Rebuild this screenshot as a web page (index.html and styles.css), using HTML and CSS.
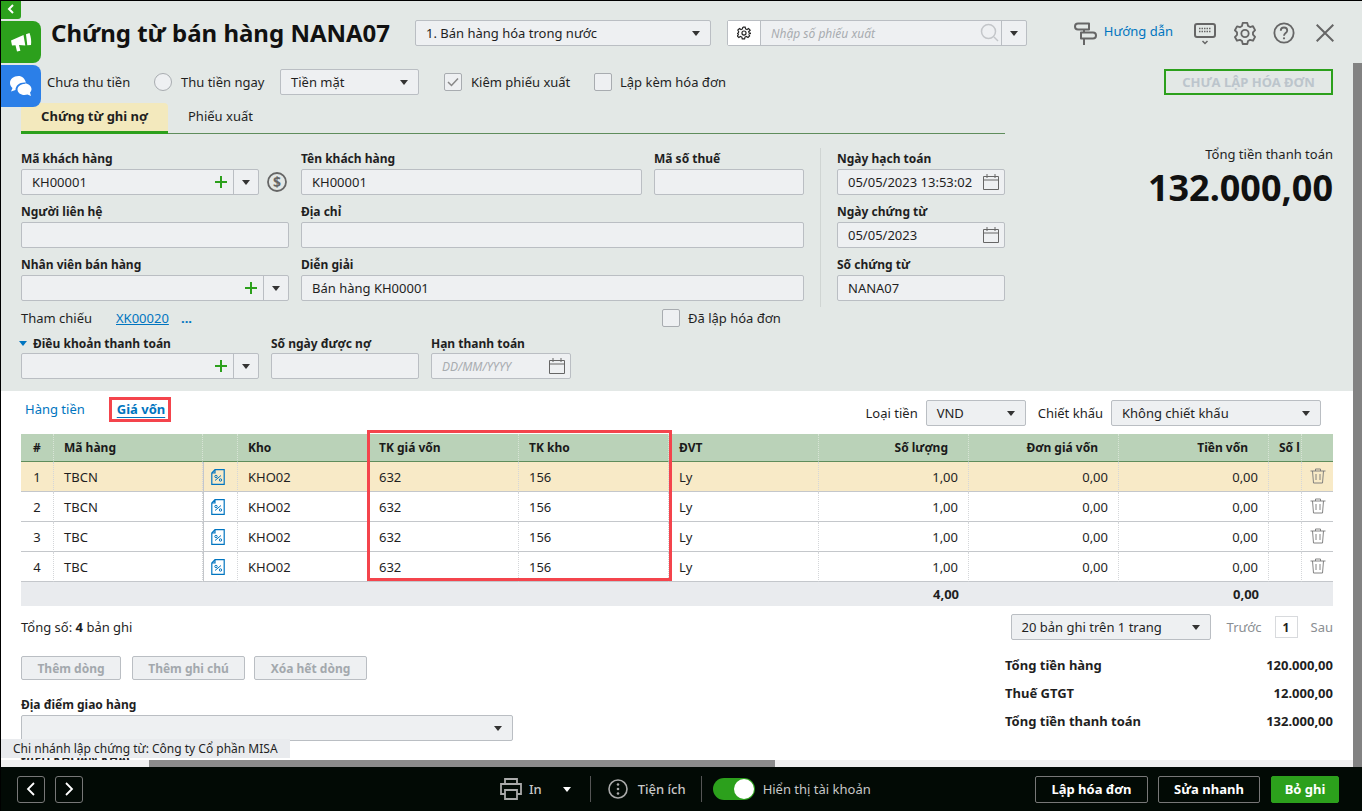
FILE: index.html
```html
<!DOCTYPE html>
<html lang="vi">
<head>
<meta charset="utf-8">
<title>Chứng từ bán hàng NANA07</title>
<link rel="stylesheet" href="styles.css">
</head>
<body>
<svg class="defs" width="0" height="0" aria-hidden="true">
  <symbol id="cal" viewBox="0 0 18 18"><path d="M1.5 3.5h15v13h-15zM1.5 7h15M5 1v4M13 1v4" fill="none" stroke="#666" stroke-width="1"/></symbol>
  <symbol id="plus" viewBox="0 0 12 12"><path d="M6 0v12M0 6h12" stroke="#2ca01c" stroke-width="2" fill="none"/></symbol>
  <symbol id="doc" viewBox="0 0 14 16"><path d="M4 .7h9.2v14.6H.8V4zM4 .7V4H.8" fill="none" stroke="#0075c0" stroke-width="1.2"/><path d="M4 11.5l6-5" stroke="#0075c0" stroke-width="1"/><circle cx="5" cy="7.5" r="1.2" fill="none" stroke="#0075c0"/><circle cx="9.5" cy="11" r="1.2" fill="none" stroke="#0075c0"/></symbol>
  <symbol id="trash" viewBox="0 0 16 16"><path d="M.5 3h15M5.5 3V1h5v2M2.5 3l1 12h9l1-12M6 6v6M10 6v6" fill="none" stroke="#777" stroke-width=".9"/></symbol>
</svg>
<div class="app">
  <div class="workspace">
    <button class="side-collapse" type="button"><svg width="8" height="10" viewBox="0 0 8 10"><path d="M6 1L2 5l4 4" fill="none" stroke="#fff" stroke-width="2"/></svg></button>
    <div class="side-tab side-tab-green"><svg width="22" height="22" viewBox="0 0 22 22"><path d="M1 9.500L13.500 4l1.800 10.500-6.300-.6 1.400 5.800-3.400.8-1.500-6.300-3.500.4z" fill="#fff"/><path d="M16 3.200l3.500-1.200c1.500 4 2 8 1.500 12l-3.700.3z" fill="#fff"/></svg></div>
    <div class="side-tab side-tab-blue"><svg width="24" height="22" viewBox="0 0 24 22"><path d="M9.500 1C4.500 1 1 4.200 1 8c0 2 1 3.700 2.500 5L2 16.500l4.500-1.500c0-4 3.500-7.500 9-7.500h1.400C16 3.700 13 1 9.500 1z" fill="#fff"/><path d="M15.500 9C11.500 9 8.500 11.500 8.500 14.500S11.500 20 15.500 20c1 0 2-.2 3-.5l3.500 1.500-1-3.500c1-1 1.500-2.200 1.500-3.500 0-3-3-5.500-6.500-5.500z" fill="#fff"/></svg></div>

    <section class="top-panel">
      <header class="title-row">
        <h1 class="title">Chứng từ bán hàng NANA07</h1>
        <div class="select select-type"><span>1. Bán hàng hóa trong nước</span><i class="caret"></i></div>
        <div class="search-box">
          <span class="search-gear"><svg width="14" height="14" viewBox="0 0 24 24"><circle cx="12" cy="12" r="3.500" fill="none" stroke="#222" stroke-width="2"/><path d="M10 2h4l.7 3 2.500 1 2.600-1.600 2.800 2.800L20 9.800l1 2.500 3 .7v-2M10 2l-.7 3-2.500 1-2.600-1.600L1.400 7.200 3 9.800 2 12.300l-2 .7M20 14.200l1.600 2.600-2.800 2.800-2.600-1.600-2.500 1-.7 3h-4l-.7-3-2.500-1-2.600 1.600-2.800-2.800L3 14.200" fill="none" stroke="#222" stroke-width="2"/></svg></span>
          <span class="search-input">Nhập số phiếu xuất</span>
          <svg class="search-icon" width="20" height="20" viewBox="0 0 20 20"><circle cx="8.500" cy="8.500" r="7" fill="none" stroke="#c3c6c9" stroke-width="1.500"/><path d="M14 14l4 4" stroke="#c3c6c9" stroke-width="1.500"/></svg>
          <span class="search-drop"><i class="caret"></i></span>
        </div>
        <div class="tools">
          <svg class="guide-icon" width="23" height="24" viewBox="0 0 23 24"><path d="M4 1.500h11v6H4a3 3 0 0 1 0-6zM7 10.500h12a3 3 0 0 1 0 6H7zM10 7.500v3M10 16.500v6.500" fill="none" stroke="#666" stroke-width="2" stroke-linejoin="round"/></svg>
          <a class="guide-link">Hướng dẫn</a>
          <svg class="tool-key" width="22" height="22" viewBox="0 0 22 22"><rect x="1" y="1" width="20" height="13" rx="2" fill="none" stroke="#666" stroke-width="2"/><path d="M5 5.500h12M5 8.500h12" stroke="#666" stroke-width="1.500" stroke-dasharray="1.500 1"/><path d="M8.500 18l2.500 2.500 2.500-2.500" fill="none" stroke="#666" stroke-width="1.500"/></svg>
          <svg class="tool-gear" width="22" height="24" viewBox="0 0 24 26"><path d="M9.500 2h5l.8 3.200 2.200 1.300 3.200-.9 2.300 4.200-2.300 2.400v2.600l2.300 2.400-2.300 4.200-3.200-.9-2.200 1.300-.8 3.200h-5l-.8-3.200-2.200-1.300-3.200.9L1 17.400l2.300-2.400v-2.600L1 10l2.300-4.200 3.200.9 2.200-1.300z" fill="none" stroke="#666" stroke-width="2" stroke-linejoin="round"/><circle cx="12" cy="13.500" r="4" fill="none" stroke="#666" stroke-width="2"/></svg>
          <svg class="tool-help" width="22" height="22" viewBox="0 0 24 24"><circle cx="12" cy="12" r="10.500" fill="none" stroke="#666" stroke-width="2"/><path d="M8.500 9.500C8.500 7.300 10 6 12 6s3.500 1.300 3.500 3.200c0 2.800-3.500 2.800-3.500 5.800" fill="none" stroke="#666" stroke-width="2"/><circle cx="12" cy="17.800" r="1.200" fill="#666"/></svg>
          <svg class="tool-close" width="18" height="18" viewBox="0 0 18 18"><path d="M.7.7l16.600 16.600M17.300.7L.7 17.300" stroke="#666" stroke-width="2"/></svg>
        </div>
      </header>

      <div class="option-row">
        <span class="opt-text opt-first">Chưa thu tiền</span>
        <i class="radio"></i>
        <span class="opt-text opt-second">Thu tiền ngay</span>
        <div class="select select-pay"><span>Tiền mặt</span><i class="caret"></i></div>
        <i class="check check-on"><svg width="12" height="10" viewBox="0 0 12 10"><path d="M1 5l3.500 3.500L11 1.500" fill="none" stroke="#888" stroke-width="1.500"/></svg></i>
        <span class="opt-text opt-third">Kiêm phiếu xuất</span>
        <i class="check check-off"></i>
        <span class="opt-text">Lập kèm hóa đơn</span>
        <span class="invoice-state">CHƯA LẬP HÓA ĐƠN</span>
      </div>

      <div class="tab-row">
        <span class="tab tab-active">Chứng từ ghi nợ</span>
        <span class="tab">Phiếu xuất</span>
      </div>

      <div class="form-wrap">
        <div class="form-grid">
          <div class="field">
            <label class="label">Mã khách hàng</label>
            <div class="with-dollar">
              <div class="combo combo-short"><span class="combo-text">KH00001</span><svg class="combo-plus" width="12" height="12"><use href="#plus"/></svg><span class="combo-drop"><i class="caret"></i></span></div>
              <svg class="dollar-icon" width="20" height="20" viewBox="0 0 20 20"><circle cx="10" cy="10" r="9" fill="none" stroke="#666" stroke-width="1.800"/><text x="10" y="15" text-anchor="middle" class="dollar">$</text></svg>
            </div>
          </div>
          <div class="field">
            <label class="label">Tên khách hàng</label>
            <div class="input">KH00001</div>
          </div>
          <div class="field">
            <label class="label">Mã số thuế</label>
            <div class="input"></div>
          </div>
          <div class="field-side">
            <div class="field">
              <label class="label">Ngày hạch toán</label>
              <div class="input input-date"><span>05/05/2023 13:53:02</span><svg width="18" height="18"><use href="#cal"/></svg></div>
            </div>
            <div class="field">
              <label class="label">Ngày chứng từ</label>
              <div class="input input-date"><span>05/05/2023</span><svg width="18" height="18"><use href="#cal"/></svg></div>
            </div>
            <div class="field">
              <label class="label">Số chứng từ</label>
              <div class="input">NANA07</div>
            </div>
          </div>
          <div class="field">
            <label class="label">Người liên hệ</label>
            <div class="input"></div>
          </div>
          <div class="field field-wide">
            <label class="label">Địa chỉ</label>
            <div class="input"></div>
          </div>
          <div class="field">
            <label class="label">Nhân viên bán hàng</label>
            <div class="combo"><span class="combo-text"></span><svg class="combo-plus" width="12" height="12"><use href="#plus"/></svg><span class="combo-drop"><i class="caret"></i></span></div>
          </div>
          <div class="field field-wide">
            <label class="label">Diễn giải</label>
            <div class="input">Bán hàng KH00001</div>
          </div>
        </div>

        <div class="ref-row">
          <span class="ref-label">Tham chiếu</span>
          <a class="ref-link">XK00020</a>
          <span class="ref-more">...</span>
          <i class="check check-ref"></i>
          <span class="opt-text">Đã lập hóa đơn</span>
        </div>

        <div class="terms-row">
          <div class="field field-terms">
            <label class="label"><i class="caret caret-blue"></i>Điều khoản thanh toán</label>
            <div class="combo"><span class="combo-text"></span><svg class="combo-plus" width="12" height="12"><use href="#plus"/></svg><span class="combo-drop"><i class="caret"></i></span></div>
          </div>
          <div class="field field-days">
            <label class="label">Số ngày được nợ</label>
            <div class="input"></div>
          </div>
          <div class="field field-due">
            <label class="label">Hạn thanh toán</label>
            <div class="input input-date"><span class="placeholder">DD/MM/YYYY</span><svg width="18" height="18"><use href="#cal"/></svg></div>
          </div>
        </div>

        <div class="grand-total">
          <div class="grand-label">Tổng tiền thanh toán</div>
          <div class="grand-value">132.000,00</div>
        </div>
      </div>
    </section>

    <section class="detail-panel">
      <div class="detail-bar">
        <span class="sub-tab">Hàng tiền</span>
        <span class="sub-tab sub-tab-active">Giá vốn</span>
        <span class="bar-label bar-currency">Loại tiền</span>
        <div class="select select-currency"><span>VND</span><i class="caret"></i></div>
        <span class="bar-label bar-discount">Chiết khấu</span>
        <div class="select select-discount"><span>Không chiết khấu</span><i class="caret"></i></div>
      </div>

      <table class="grid">
        <colgroup>
          <col class="c-no"><col class="c-code"><col class="c-doc"><col class="c-store"><col class="c-acc"><col class="c-acc"><col class="c-acc"><col class="c-acc"><col class="c-acc"><col class="c-acc"><col class="c-lot"><col class="c-del">
        </colgroup>
        <thead>
          <tr>
            <th class="ta-c">#</th><th>Mã hàng</th><th></th><th>Kho</th><th>TK giá vốn</th><th>TK kho</th><th>ĐVT</th>
            <th class="ta-r pad-r">Số lượng</th><th class="ta-r pad-r">Đơn giá vốn</th><th class="ta-r pad-r">Tiền vốn</th><th class="clip">Số l</th><th></th>
          </tr>
        </thead>
        <tbody>
          <tr class="row-on">
            <td class="ta-c">1</td><td>TBCN</td><td class="cell-doc"><svg width="14" height="16"><use href="#doc"/></svg></td><td>KHO02</td><td>632</td><td>156</td><td>Ly</td>
            <td class="ta-r">1,00</td><td class="ta-r">0,00</td><td class="ta-r">0,00</td><td></td><td class="ta-c"><svg class="trash-icon" width="16" height="16"><use href="#trash"/></svg></td>
          </tr>
          <tr>
            <td class="ta-c">2</td><td>TBCN</td><td class="cell-doc"><svg width="14" height="16"><use href="#doc"/></svg></td><td>KHO02</td><td>632</td><td>156</td><td>Ly</td>
            <td class="ta-r">1,00</td><td class="ta-r">0,00</td><td class="ta-r">0,00</td><td></td><td class="ta-c"><svg class="trash-icon" width="16" height="16"><use href="#trash"/></svg></td>
          </tr>
          <tr>
            <td class="ta-c">3</td><td>TBC</td><td class="cell-doc"><svg width="14" height="16"><use href="#doc"/></svg></td><td>KHO02</td><td>632</td><td>156</td><td>Ly</td>
            <td class="ta-r">1,00</td><td class="ta-r">0,00</td><td class="ta-r">0,00</td><td></td><td class="ta-c"><svg class="trash-icon" width="16" height="16"><use href="#trash"/></svg></td>
          </tr>
          <tr>
            <td class="ta-c">4</td><td>TBC</td><td class="cell-doc"><svg width="14" height="16"><use href="#doc"/></svg></td><td>KHO02</td><td>632</td><td>156</td><td>Ly</td>
            <td class="ta-r">1,00</td><td class="ta-r">0,00</td><td class="ta-r">0,00</td><td></td><td class="ta-c"><svg class="trash-icon" width="16" height="16"><use href="#trash"/></svg></td>
          </tr>
        </tbody>
        <tfoot>
          <tr><td colspan="7"></td><td class="ta-r">4,00</td><td></td><td class="ta-r">0,00</td><td colspan="2"></td></tr>
        </tfoot>
      </table>

      <div class="pager-row">
        <span class="count">Tổng số: <b>4</b> bản ghi</span>
        <div class="select select-page"><span>20 bản ghi trên 1 trang</span><i class="caret"></i></div>
        <span class="page-nav page-prev">Trước</span>
        <span class="page-num">1</span>
        <span class="page-nav">Sau</span>
      </div>

      <div class="lower">
        <div class="lower-left">
          <div class="btn-row">
            <span class="btn-off btn-add">Thêm dòng</span>
            <span class="btn-off btn-note">Thêm ghi chú</span>
            <span class="btn-off btn-clear">Xóa hết dòng</span>
          </div>
          <label class="label label-delivery">Địa điểm giao hàng</label>
          <div class="select select-delivery"><span></span><i class="caret"></i></div>
          <div class="label label-next">ĐIỀU KHOẢN KHÁC</div>
        </div>
        <div class="summary">
          <div class="sum-row"><b>Tổng tiền hàng</b><b>120.000,00</b></div>
          <div class="sum-row"><b>Thuế GTGT</b><b>12.000,00</b></div>
          <div class="sum-row"><b>Tổng tiền thanh toán</b><b>132.000,00</b></div>
        </div>
      </div>

      <i class="mark mark-tab"></i>
      <i class="mark mark-cols"></i>
    </section>

    <div class="branch-tip">Chi nhánh lập chứng từ: Công ty Cổ phần MISA</div>
    <div class="scroll-h"><i class="scroll-h-thumb"></i></div>
    <div class="scroll-v"></div>
  </div>

  <footer class="footer">
    <button class="nav-btn" type="button"><svg width="10" height="14" viewBox="0 0 10 14"><path d="M8 1L2 7l6 6" fill="none" stroke="#fff" stroke-width="1.800"/></svg></button>
    <button class="nav-btn" type="button"><svg width="10" height="14" viewBox="0 0 10 14"><path d="M2 1l6 6-6 6" fill="none" stroke="#fff" stroke-width="1.800"/></svg></button>
    <div class="foot-center">
      <svg width="22" height="22" viewBox="0 0 22 22"><path d="M5 6V1h12v5M5 16H1V6h20v10h-4" fill="none" stroke="#aaa" stroke-width="1.800"/><path d="M5 12h12v9H5z" fill="none" stroke="#aaa" stroke-width="1.800"/></svg>
      <span class="foot-text foot-in">In</span>
      <i class="caret caret-white"></i>
      <i class="foot-sep foot-sep-a"></i>
      <svg width="20" height="20" viewBox="0 0 20 20"><circle cx="10" cy="10" r="9" fill="none" stroke="#aaa" stroke-width="1.600"/><circle cx="10" cy="5.500" r="1.300" fill="#aaa"/><circle cx="10" cy="10" r="1.300" fill="#aaa"/><circle cx="10" cy="14.500" r="1.300" fill="#aaa"/></svg>
      <span class="foot-text foot-util">Tiện ích</span>
      <i class="foot-sep foot-sep-b"></i>
      <span class="toggle"><i></i></span>
      <span class="foot-text">Hiển thị tài khoản</span>
    </div>
    <div class="foot-right">
      <button class="foot-btn foot-btn-a" type="button">Lập hóa đơn</button>
      <button class="foot-btn foot-btn-b" type="button">Sửa nhanh</button>
      <button class="foot-btn foot-btn-c" type="button">Bỏ ghi</button>
    </div>
  </footer>
</div>
</body>
</html>
```
FILE: styles.css
```css
* { box-sizing: border-box; }
html, body { margin: 0; height: 100%; overflow: hidden; }
body { background: #000; font-family: "Noto Sans", sans-serif; font-size: 13px; color: #1f1f1f; }
.defs { position: absolute; }
i { display: block; font-style: normal; }
.app { width: 1362px; height: 811px; padding: 1px 0 0 1px; display: flex; flex-direction: column; }
.workspace { position: relative; flex: 1; min-height: 0; overflow: hidden; background: #fff; }

.side-collapse { position: absolute; z-index: 5; left: 0; top: 0; width: 20px; height: 18px; border: 0; padding: 0 0 2px; background: #2ca01c; border-radius: 0 0 3px 0; display: flex; align-items: center; justify-content: center; }
.side-tab { position: absolute; z-index: 5; left: 0; width: 40px; height: 42px; border-radius: 0 8px 8px 0; display: flex; align-items: center; justify-content: center; }
.side-tab-green { top: 20px; background: #2ca01c; }
.side-tab-blue { top: 64px; background: #2b7fe8; }

.top-panel { background: #e3e8e6; height: 390px; padding: 19px 29px 0 20px; position: relative; }
.title-row { display: flex; align-items: center; height: 26px; }
.title { margin: 0 0 0 30px; width: 364px; font-size: 24px; line-height: 26px; font-weight: 700; color: #111; white-space: nowrap; }
.select { height: 26px; background: #eef0f2; border: 1px solid #babec3; border-radius: 2px; display: flex; align-items: center; justify-content: space-between; padding: 0 10px; color: #1f1f1f; white-space: nowrap; }
.caret { width: 0; height: 0; border-left: 4.500px solid transparent; border-right: 4.500px solid transparent; border-top: 5px solid #333; flex: none; }
.select-type { width: 296px; }
.search-box { margin-left: 16px; width: 300px; height: 26px; display: flex; align-items: center; position: relative; border: 1px solid #babec3; border-radius: 2px; background: #eef0f2; }
.search-gear { width: 33px; height: 24px; background: #fff; border-right: 1px solid #babec3; display: flex; align-items: center; justify-content: center; }
.search-input { flex: 1; padding-left: 10px; font-size: 12px; font-style: italic; color: #a8acb0; }
.search-icon { margin-right: 1px; }
.search-drop { width: 25px; height: 24px; border-left: 1px solid #babec3; display: flex; align-items: center; justify-content: center; }
.tools { margin-left: auto; margin-right: -1px; display: flex; align-items: center; }
.guide-link { margin-left: 7px; color: #0075c0; font-size: 13px; margin-top: -5px; }
.guide-icon { margin-top: 1px; }
.tool-key { margin-left: 21px; margin-top: 1px; }
.tool-gear { margin-left: 18px; }
.tool-help { margin-left: 17px; }
.tool-close { margin-left: 21px; }

.option-row { display: flex; align-items: center; height: 26px; margin-top: 23px; }
.opt-text { white-space: nowrap; }
.opt-first { margin-left: 26px; width: 107px; }
.radio { width: 18px; height: 18px; border-radius: 50%; background: #eef0f2; border: 1px solid #a8acb0; }
.opt-second { margin-left: 9px; width: 99px; }
.select-pay { width: 139px; }
.check { width: 18px; height: 18px; border: 1px solid #a8acb0; border-radius: 2px; background: #eef0f2; display: flex; align-items: center; justify-content: center; }
.check-on { margin-left: 25px; }
.opt-third { margin-left: 9px; width: 123px; }
.check-off { margin-right: 8px; }
.invoice-state { margin-left: auto; width: 169px; height: 26px; border: 2px solid #2ca01c; display: flex; align-items: center; justify-content: center; font-weight: 700; font-size: 13px; color: #bcc5cc; }

.tab-row { display: flex; height: 31px; margin-top: 8px; width: 984px; border-bottom: 1px solid #5f8d5c; }
.tab { height: 30px; display: flex; align-items: center; padding: 0 20px 4px; }
.tab-active { width: 147px; height: 31px; justify-content: center; background: #f3e9bd; border-bottom: 3px solid #2ca01c; border-radius: 4px 4px 0 0; font-weight: 700; padding: 0 0 3px; }

.form-wrap { position: relative; padding-top: 14px; }
.form-grid { display: grid; grid-template-columns: 268px 341px 150px 189px; column-gap: 12px; grid-auto-rows: 53px; }
.field { min-width: 0; }
.field-wide { grid-column: span 2; }
.label { display: block; height: 21px; padding-top: 1px; line-height: 20px; font-size: 12px; font-weight: 700; white-space: nowrap; }
.input { height: 26px; background: #eef0f2; border: 1px solid #babec3; border-radius: 2px; padding: 0 10px; display: flex; align-items: center; justify-content: space-between; white-space: nowrap; }
.input-date { padding-right: 4px; }
.placeholder { font-size: 12px; font-style: italic; color: #a8acb0; }
.combo { height: 26px; background: #eef0f2; border: 1px solid #babec3; border-radius: 2px; display: flex; align-items: center; }
.combo-text { flex: 1; padding-left: 10px; }
.combo-plus { margin-right: 6px; }
.combo-drop { width: 25px; height: 24px; border-left: 1px solid #babec3; display: flex; align-items: center; justify-content: center; }
.with-dollar { display: flex; align-items: center; gap: 8px; }
.combo-short { width: 238px; flex: none; }
.dollar-icon { flex: none; }
.dollar { font-size: 14px; font-weight: 700; fill: #666; }
.field-side { grid-row: span 3; margin-left: 4px; padding-left: 16px; border-left: 1px solid #d0d5d3; display: grid; grid-auto-rows: 53px; }

.ref-row { display: flex; align-items: center; height: 22px; }
.ref-label { width: 95px; }
.ref-link { color: #0075c0; text-decoration: underline; width: 65px; }
.ref-more { color: #0075c0; font-weight: 700; }
.check-ref { margin-left: 470px; margin-right: 8px; }

.terms-row { display: flex; gap: 12px; margin-top: 3px; }
.terms-row .label { padding-top: 2px; }
.field-terms { width: 238px; }
.field-days { width: 148px; }
.field-due { width: 140px; }
.caret-blue { display: inline-block; border-top-color: #0075c0; margin: 0 6px 2px -2px; border-left-width: 4px; border-right-width: 4px; }

.grand-total { position: absolute; right: 0; top: 10px; text-align: right; }
.grand-label { font-size: 13px; line-height: 20px; }
.grand-value { font-size: 36px; line-height: 47px; font-weight: 700; color: #111; }

.detail-panel { position: relative; padding: 9px 29px 0 20px; }
.detail-bar { display: flex; align-items: center; height: 26px; padding-right: 12px; }
.sub-tab { color: #0075c0; margin-left: 4px; margin-top: -8px; }
.sub-tab-active { font-weight: 700; margin-left: 32px; text-decoration: underline; text-underline-offset: 3px; }
.bar-label { white-space: nowrap; }
.bar-currency { margin-left: auto; }
.select-currency { width: 100px; margin-left: 8px; }
.bar-discount { margin-left: 12px; }
.select-discount { width: 210px; margin-left: 8px; }

.grid { margin-top: 8px; width: 1312px; table-layout: fixed; border-collapse: separate; border-spacing: 0; }
.c-no { width: 33px; }
.c-code { width: 149px; }
.c-doc { width: 35px; }
.c-store { width: 131px; }
.c-acc { width: 150px; }
.c-lot { width: 33px; }
.c-del { width: 31px; }
.grid th { height: 28px; background: #bad2b8; border-bottom: 1px solid #5f8d5c; border-right: 1px dotted #d8e4d6; font-size: 12px; font-weight: 700; text-align: left; padding: 0 10px; white-space: nowrap; color: #1a1a1a; }
.grid th:last-child, .grid td:last-child { border-right: 0; }
.grid td { height: 30px; border-bottom: 1px solid #c4c7cb; border-right: 1px dotted #d4d6d9; padding: 0 10px; white-space: nowrap; }
.grid tbody td:nth-child(3) { border-left: 1px solid #c4c7cb; }
.grid td svg { display: block; margin: 0 auto; }
.grid td svg.trash-icon { margin-top: -2px; }
.grid td.cell-doc { padding: 0 0 0 7px; }
.grid td.cell-doc svg { margin: 0; }
.grid td.ta-c, .grid th.ta-c { padding: 0; text-align: center; }
.grid .ta-r { text-align: right; }
.grid th.pad-r { padding-right: 20px; }
.grid th.clip { overflow: hidden; padding-right: 0; }
.row-on td { background: #f8eac7; }
.grid tfoot td { height: 24px; background: #e9ebee; border: 0; font-weight: 700; }

.pager-row { display: flex; align-items: center; height: 26px; margin-top: 8px; }
.count { margin-right: auto; }
.select-page { width: 200px; }
.page-nav { color: #8a8e92; }
.page-prev { margin-left: 16px; }
.page-num { margin: 0 13px; width: 23px; height: 22px; background: #fff; border: 1px solid #d8dadd; display: flex; align-items: center; justify-content: center; font-weight: 700; font-size: 12px; }

.lower { display: flex; justify-content: space-between; }
.lower-left { width: 492px; padding-top: 16px; }
.btn-row { display: flex; height: 24px; margin-bottom: 14px; }
.btn-off { height: 24px; background: #eef0f2; border: 1px solid #babec3; border-radius: 2px; display: flex; align-items: center; justify-content: center; font-size: 12px; font-weight: 700; color: #a3a8ad; }
.btn-add { width: 100px; }
.btn-note { width: 113px; margin-left: 11px; }
.btn-clear { width: 113px; margin-left: 9px; }
.select-delivery { width: 492px; margin-bottom: 7px; }
.label-next { height: 14px; }
.summary { width: 328px; padding-top: 11px; }
.sum-row { display: flex; justify-content: space-between; align-items: center; height: 28px; font-size: 13px; }

.mark { position: absolute; border: 3px solid #f4444c; }
.mark-tab { left: 108px; top: 6px; width: 62px; height: 25px; }
.mark-cols { left: 366px; top: 39px; width: 305px; height: 151px; }

.branch-tip { position: absolute; z-index: 4; left: 0; top: 738px; width: 289px; height: 19px; background: #e9ebee; padding-left: 12px; line-height: 19px; font-size: 12px; white-space: nowrap; }
.scroll-h { position: absolute; z-index: 3; left: 0; right: 0; bottom: 0; height: 7px; background: #f0f0f0; }
.scroll-h-thumb { margin-left: 148px; width: 626px; height: 7px; background: #8c8c8c; }
.scroll-v { position: absolute; z-index: 3; right: 0; top: 62px; bottom: 0; width: 9px; background: #828282; }

.footer { height: 44px; flex: none; background: #020a05; display: flex; align-items: center; padding: 0 23px 0 16px; color: #fff; }
.nav-btn { width: 28px; height: 27px; background: transparent; border: 1px solid #777; border-radius: 3px; padding: 0; margin-right: 10px; display: flex; align-items: center; justify-content: center; }
.foot-center { margin-left: 407px; display: flex; align-items: center; }
.foot-text { color: #c8c8c8; white-space: nowrap; }
.foot-in { margin-left: 7px; font-weight: 500; }
.caret-white { border-top-color: #fff; margin-left: 21px; }
.foot-sep { width: 1px; height: 26px; background: #555; }
.foot-sep-a { margin: 0 17px 0 19px; }
.foot-util { margin-left: 10px; font-weight: 500; }
.foot-sep-b { margin: 0 11px 0 15px; }
.toggle { width: 42px; height: 22px; border-radius: 11px; background: #2ca01c; position: relative; margin-right: 8px; }
.toggle i { position: absolute; right: 1px; top: 1px; width: 20px; height: 20px; border-radius: 50%; background: #fff; }
.foot-right { margin-left: auto; display: flex; gap: 10px; }
.foot-btn { height: 27px; background: transparent; border: 1px solid #777; border-radius: 2px; color: #fff; font-family: "Noto Sans", sans-serif; font-size: 13px; font-weight: 700; padding: 0; }
.foot-btn-a { width: 113px; }
.foot-btn-b { width: 102px; }
.foot-btn-c { width: 68px; background: #2ca01c; border-color: #2ca01c; margin-left: 1px; }
```
